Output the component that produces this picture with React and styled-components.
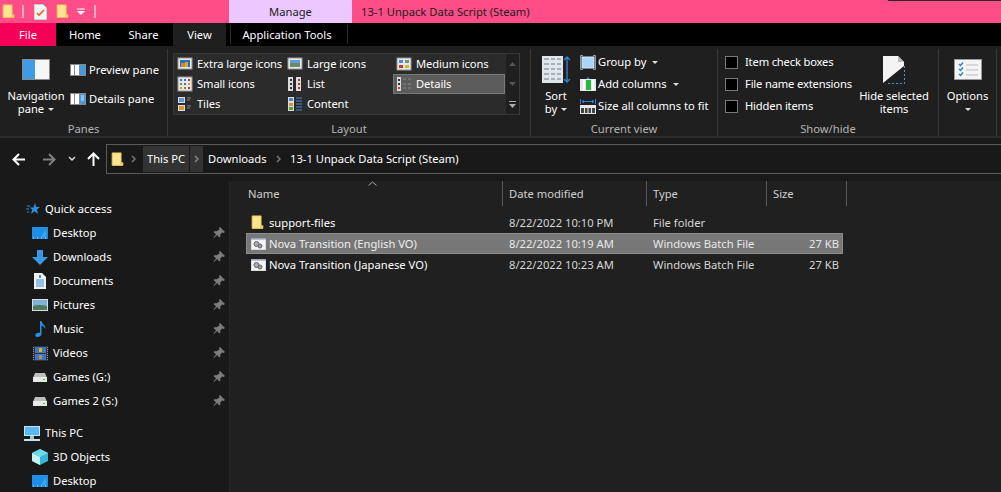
import React from "react";
import styled, { createGlobalStyle } from "styled-components";

const Global = createGlobalStyle`
  html, body { margin: 0; padding: 0; background: #191919; }
  * { box-sizing: border-box; }
`;
const Win = styled.div`
  width: 1001px; height: 492px; overflow: hidden; background: #191919; color: #fff;
  font-family: "Noto Sans", "Open Sans", sans-serif; font-size: 11.2px; line-height: 14px;
  display: flex; flex-direction: column; position: relative;
`;
const TitleBar = styled.div`
  height: 23px; background: #ff4d88; display: flex; align-items: center; flex: none; position: relative; color: #1c1c1c;
`;
const TopLine = styled.div`position: absolute; right: 0; top: 0; width: 113px; height: 1px; background: #2a2a2a;`;
const Quick = styled.div`width: 229px; display: flex; align-items: center; padding-left: 2px; height: 23px;`;
const QSep = styled.div`width: 2px; height: 13px; background: #f7a8c4; margin: ${p => p.$m};`;
const Manage = styled.div`width: 123px; height: 23px; background: #ebc8ff; display: flex; align-items: center; justify-content: center;`;
const TitleText = styled.div`margin-left: 9px;`;
const Tabs = styled.div`height: 23px; background: #000; display: flex; flex: none;`;
const Tab = styled.div`
  width: ${p => p.$w}px; height: 23px; display: flex; align-items: center; justify-content: center;
  background: ${p => p.$bg || "transparent"};
`;
const ContextTab = styled.div`
  width: 118px; height: 19px; margin: 2px 0 0 4px; padding-right: 4px; display: flex; align-items: center; justify-content: center;
  border-left: 1px solid #2b2b2b; border-right: 1px solid #2b2b2b;
`;
const Ribbon = styled.div`
  height: 92px; flex: none; background: #1f1f1f; display: grid;
  grid-template-columns: 168px 363px 187px 221px 58px 4px; border-bottom: 2px solid #2c2c2c; padding-top: 3px;
`;
const Group = styled.div`
  display: flex; flex-direction: column; border-right: 1px solid #3a3a3a; height: 87px;
`;
const GroupBody = styled.div`flex: 1; display: flex; padding: ${p => p.$pad || "0"}; min-height: 0;`;
const GroupLabel = styled.div`height: 14px; flex: none; text-align: center; color: #b5b5b5; line-height: 14px;`;
const BigBtn = styled.div`
  width: ${p => p.$w}px; flex: none; display: flex; flex-direction: column; align-items: center; text-align: center; line-height: 13px;
  padding-top: ${p => p.$top || 10}px; margin-left: ${p => p.$ml || 0}px; margin-right: ${p => p.$mr || 0}px;
`;
const RightBig = styled(BigBtn)`margin-left: auto; white-space: nowrap; letter-spacing: -0.08px;`;
const BigIcon = styled.div`height: ${p => p.$h}px; display: flex; margin-bottom: ${p => p.$mb}px; align-items: flex-start;`;
const Caret = styled.span`
  display: inline-block; width: 0; height: 0; border-left: 3px solid transparent; border-right: 3px solid transparent;
  border-top: 3px solid #ddd; margin-left: ${p => p.$ml ?? 4}px; vertical-align: 2px;
`;
const SmallStack = styled.div`display: flex; flex-direction: column; gap: ${p => p.$gap}px; padding-top: ${p => p.$top}px; margin-left: ${p => p.$ml || 0}px;`;
const SmallBtn = styled.div`display: flex; align-items: center; gap: ${p => p.$gap ?? 3}px; height: 14px; white-space: nowrap;`;
const Gallery = styled.div`
  width: 347px; height: 62px; background: #2b2b2b; border: 1px solid #3a3a3a; display: flex;
`;
const GalleryGrid = styled.div`width: 331px; display: grid; grid-template-columns: 110px 109px 112px; grid-template-rows: repeat(3, 20px); letter-spacing: -0.1px;`;
const GalleryItem = styled.div`
  display: flex; align-items: center; padding-left: ${p => p.$sel ? 2 : 3}px; gap: 4px; white-space: nowrap;
  ${p => p.$sel && "background: #5c5c5c; border: 1px solid #777;"}
`;
const GIcon = styled.div`width: 16px; height: 16px; flex: none; display: flex;`;
const Scroll = styled.div`width: 14px; display: flex; flex-direction: column; align-items: center; background: #1f1f1f; margin-left: 1px;`;
const ScrollCell = styled.div`height: 20px; display: flex; align-items: center; justify-content: center;`;
const CheckRow = styled.div`display: flex; align-items: center; gap: 7px; height: 14px; white-space: nowrap; letter-spacing: -0.17px;`;
const Check = styled.div`width: 13px; height: 13px; background: #000; border: 1px solid #7a7a7a;`;
const NavBar = styled.div`height: 43px; flex: none; background: #191919; display: flex; align-items: flex-start; padding-top: 6px;`;
const NavBtns = styled.div`width: 106px; height: 30px; flex: none; display: flex; align-items: center;`;
const NavBtn = styled.div`width: ${p => p.$w}px; flex: none; display: flex; justify-content: center;`;
const Address = styled.div`
  flex: 1; height: 30px; border: 1px solid #5a5a5a; border-right: none; background: #191919; display: flex; align-items: center; padding-left: 4px;
`;
const Crumb = styled.div`
  height: 26px; display: flex; align-items: center; justify-content: ${p => p.$start ? "flex-start" : "center"}; flex: none; width: ${p => p.$w}px;
  margin-left: ${p => p.$ml || 0}px; background: ${p => p.$on ? "#333" : "transparent"}; white-space: nowrap;
`;
const Body = styled.div`flex: 1; display: flex; min-height: 0;`;
const Sidebar = styled.div`width: 229px; flex: none; background: #191919; padding-top: 16px; overflow: hidden;`;
const SideRow = styled.div`
  height: 24px; display: flex; align-items: center; position: relative;
  padding-left: ${p => p.$pl}px; margin-top: ${p => p.$mt || 0}px;
`;
const SideIcon = styled.div`width: ${p => p.$w}px; flex: none; display: flex; align-items: center; justify-content: ${p => p.$center ? "center" : "flex-start"}; margin-right: ${p => p.$mr || 0}px; height: 16px;`;
const Pin = styled.div`position: absolute; left: 213px; top: 6px; display: flex;`;
const Pane = styled.div`flex: 1; background: #202020; border-left: 1px solid #262626; padding-left: 16px;`;
const Head = styled.div`
  height: 26px; display: grid; grid-template-columns: 257px 144px 120px 80px; position: relative; margin-bottom: 5px; width: 601px;
`;
const HeadCell = styled.div`
  padding-left: ${p => p.$pl}px; display: flex; align-items: center; height: 25px; color: #d0d0d0; border-right: 1px solid #5a5a5a;
`;
const SortMark = styled.div`position: absolute; left: 122px; top: 0; display: flex;`;
const Row = styled.div`
  width: 597px; height: 21px; display: grid; grid-template-columns: 22px 240px 144px 120px 1fr; align-items: center;
  background: ${p => p.$sel ? "#777" : "transparent"}; border: 1px solid ${p => p.$sel ? "#8c8c8c" : "transparent"};
  color: ${p => p.$sel ? "#f0f0f0" : "#fff"}; white-space: nowrap;
`;
const RowIcon = styled.div`display: flex; padding-left: 4px;`;
const Muted = styled.div`color: ${p => p.$sel ? "#e8e8e8" : "#d6d6d6"}; text-align: ${p => p.$right ? "right" : "left"}; padding-right: ${p => p.$right ? 3 : 0}px;`;
const Spacer = styled.span`width: ${p => p.$w}px; flex: none;`;

const Folder = ({ s = 16 }) => (
  <svg width={s} height={s * 1.1} viewBox="0 0 14 16">
    <path d="M1 1h10v11h2v3H1z" fill="#fde58f" stroke="#e9c95c" />
    <path d="M11 12v3" stroke="#d8b64a" />
  </svg>
);
const BigNav = () => (
  <svg width="28" height="21" viewBox="0 0 28 21">
    <rect width="28" height="21" fill="#8a8a8a" /><rect x="1" y="1" width="12" height="19" fill="#3f9be6" /><rect x="13" y="1" width="14" height="19" fill="#f6f6f6" />
  </svg>
);
const PaneIco = ({ kind }) => (
  <svg width="16" height="12" viewBox="0 0 16 12">
    <rect width="16" height="12" fill="#8a8a8a" /><rect x="1" y="1" width="3" height="10" fill="#fff" />
    <rect x="5" y="1" width="4" height="10" fill="#fff" /><rect x="10" y="1" width="5" height="10" fill="#3f9be6" />
    {kind === "d" && <path d="M11 3h3M11 5h3M11 7h3" stroke="#cfe6fb" />}
  </svg>
);
const Dots = ({ d }) => (
  <svg width="16" height="16" viewBox="0 0 16 16">{d}</svg>
);
const Ico = {
  xl: <Dots d={<><rect x="1" y="2" width="14" height="11" fill="#e8e8e8" stroke="#999" /><rect x="3" y="4" width="10" height="7" fill="#2a6fb5" /><rect x="4" y="7" width="4" height="4" fill="#c83" /><rect x="8" y="6" width="3" height="5" fill="#ca3" /></>} />,
  large: <Dots d={<><rect x="1" y="2" width="14" height="11" fill="#e8e8e8" stroke="#999" /><rect x="3" y="4" width="10" height="3" fill="#5aa0d8" /><rect x="3" y="7" width="10" height="4" fill="#6a8a6a" /></>} />,
  med: <Dots d={<><rect x="1" y="2" width="14" height="12" fill="#e8e8e8" stroke="#999" /><rect x="3" y="4" width="4" height="3" fill="#4a8ad0" /><rect x="9" y="4" width="4" height="3" fill="#6a9a7a" /><rect x="3" y="9" width="4" height="3" fill="#c33" /><rect x="9" y="9" width="4" height="3" fill="#cb3" /></>} />,
  small: <Dots d={<><rect x="1" y="1" width="14" height="14" fill="#e8e8e8" stroke="#999" /><path d="M3 3h2v2H3zM7 3h2v2H7z" fill="#3a7ac0" /><path d="M11 3h2v2h-2z" fill="#c33" /><path d="M3 7h2v2H3z" fill="#693" /><path d="M7 7h2v2H7z" fill="#3a7ac0" /><path d="M11 7h2v2h-2z" fill="#c93" /><path d="M3 11h2v2H3z" fill="#c93" /><path d="M7 11h2v2H7z" fill="#693" /><path d="M11 11h2v2h-2z" fill="#c33" /></>} />,
  list: <Dots d={<><rect x="1" y="1" width="5" height="14" fill="#ddd" /><rect x="9" y="1" width="5" height="14" fill="#ddd" /><path d="M3 3h2v2H3zM3 7h2v2H3zM3 11h2v2H3z" fill="#333" /><path d="M11 3h2v2h-2zM11 7h2v2h-2zM11 11h2v2h-2z" fill="#a33" /></>} />,
  details: <Dots d={<><rect x="1" y="1" width="4" height="14" fill="#ddd" /><path d="M2 3h2v2H2zM2 7h2v2H2z" fill="#333" /><path d="M2 11h2v2H2z" fill="#c33" /><path d="M7 3h3M12 3h3M7 8h3M12 8h3M7 12h3M12 12h3" stroke="#888" /></>} />,
  tiles: <Dots d={<><rect x="1" y="1" width="7" height="6" fill="#ddd" /><rect x="2" y="2" width="5" height="4" fill="#5a9ad8" /><rect x="1" y="9" width="7" height="6" fill="#ddd" /><rect x="2" y="10" width="5" height="4" fill="#c93" /><path d="M10 2h4M10 4h3M10 10h4M10 12h3" stroke="#888" /></>} />,
  content: <Dots d={<><rect x="1" y="1" width="6" height="14" fill="#ddd" /><rect x="2" y="2" width="4" height="3" fill="#4a8ad0" /><rect x="2" y="7" width="4" height="3" fill="#c93" /><rect x="2" y="11" width="4" height="3" fill="#693" /><path d="M9 2h6M9 5h6M9 8h6M9 11h6M9 14h6" stroke="#4a8ad0" /></>} />,
};
const SortIco = () => (
  <svg width="29" height="27" viewBox="0 0 29 27">
    <rect width="21" height="27" fill="#dfe6ec" />
    {[3, 8, 13, 18, 23].map(y => <path key={y} d={`M2 ${y}h5M9 ${y}h4M15 ${y}h4`} stroke="#a5b0ba" strokeWidth="2" />)}
    <path d="M25 1v25M22 4l3-3 3 3M22 23l3 3 3-3" stroke="#2f80d0" strokeWidth="1.4" fill="none" />
  </svg>
);
const GroupIco = () => (
  <svg width="16" height="15" viewBox="0 0 16 15"><path d="M3 .5H.5v14H3M13 .5h2.500v14H13" stroke="#999" fill="none" /><rect x="2" y="2" width="12" height="11" fill="#a9d4f8" stroke="#d8ecfb" /></svg>
);
const AddIco = () => (
  <svg width="16" height="14" viewBox="0 0 16 14"><path d="M8 0l-2 2h4z" fill="#2f80d0" /><rect y="2" width="16" height="12" fill="#e8e8e8" /><rect x="6" y="3" width="5" height="10" fill="#25b83c" /><rect x="3" y="3" width="2" height="10" fill="#fff" /><rect x="12" y="3" width="2" height="10" fill="#fff" /></svg>
);
const SizeIco = () => (
  <svg width="16" height="15" viewBox="0 0 16 15"><path d="M.5 0v5M15.5 0v5M2 2.500h12M4 1L2 2.500 4 4M12 1l2 1.500L12 4" stroke="#2f80d0" fill="none" /><rect y="6" width="16" height="9" fill="#e8e8e8" /><path d="M1 9h14v5H1z" fill="#444" /><path d="M4.500 9v5M8 9v5M11.500 9v5" stroke="#e8e8e8" /></svg>
);
const HideIco = () => (
  <svg width="22" height="28" viewBox="0 0 22 28">
    <path d="M0 0h15l6 6v4L0 27z" fill="#f4f4f4" /><path d="M15 0l6 6h-6z" fill="#bbb" />
    <path d="M21.500 10v17.500H4" stroke="#3f9be6" strokeDasharray="2 2" fill="none" />
  </svg>
);
const OptionsIco = () => (
  <svg width="28" height="21" viewBox="0 0 28 21">
    <rect width="28" height="21" fill="#9a9a9a" /><rect x="1" y="1" width="26" height="19" fill="#f4f4f4" />
    <path d="M5 5l1.500 1.500L9 3.500M5 10l1.500 1.500L9 8.500M5 15l1.500 1.500L9 13.500" stroke="#2f80d0" strokeWidth="1.500" fill="none" />
    <path d="M12 6h12M12 11h12M12 16h12" stroke="#bbb" />
  </svg>
);
const ArrowL = () => (
  <svg width="14" height="13" viewBox="0 0 14 13"><path d="M13 6.500H2M7 1L1.500 6.500 7 12" stroke="#fff" strokeWidth="2" fill="none" /></svg>
);
const ArrowR = () => (
  <svg width="14" height="13" viewBox="0 0 14 13"><path d="M1 6.500h11M7 1l5.500 5.500L7 12" stroke="#808080" strokeWidth="2" fill="none" /></svg>
);
const ArrowUp = () => (
  <svg width="13" height="14" viewBox="0 0 13 14"><path d="M6.500 14V2M1 7l5.500-5.500L12 7" stroke="#fff" strokeWidth="2" fill="none" /></svg>
);
const Chev = () => (
  <svg width="8" height="6" viewBox="0 0 8 6"><path d="M1 1l3 3 3-3" stroke="#ddd" strokeWidth="1.500" fill="none" /></svg>
);
const ChevR = ({ c = "#777" }) => (
  <svg width="5" height="8" viewBox="0 0 5 8"><path d="M1 1l3 3-3 3" stroke={c} strokeWidth="1.500" fill="none" /></svg>
);
const PinIco = () => (
  <svg width="12" height="12" viewBox="0 0 12 12"><path d="M7 0l5 5-1.500 1L9 5.500 7 8l.500 1.500-1 1-2.500-2.500L1 11l-.500-.500L3 7.500.500 5l1-1 1.500.500L6.500 2.500 6 1z" fill="#7c7c7c" /></svg>
);
const Star = () => (
  <svg width="14" height="13" viewBox="0 0 14 13"><path d="M9 0l1.200 4H14l-3 2.500L12 11 8.500 8.300 5 11l1.200-4.500L3.500 4.500h4z" fill="#2f8fe0" /><path d="M1 3h3M0 6h3M1 9h2" stroke="#2f8fe0" /></svg>
);
const Side = {
  desktop: <svg width="16" height="12" viewBox="0 0 16 12"><rect width="16" height="12" fill="#1e8fe6" /><path d="M1 11h14" stroke="#bfe3fb" strokeDasharray="1 3" /><path d="M9 10l5-8v8z" fill="#3aa6ee" /></svg>,
  down: <svg width="16" height="15" viewBox="0 0 16 15"><path d="M5 0h6v7h5l-8 8-8-8h5z" fill="#3a97e6" /></svg>,
  docs: <svg width="12" height="16" viewBox="0 0 12 16"><path d="M0 0h8l4 4v12H0z" fill="#f2f2f2" /><path d="M2 7h8M2 9h8M2 11h8M2 13h8" stroke="#3a8fdc" /><path d="M5 2h2v3H5z" fill="#3a8fdc" /></svg>,
  pics: <svg width="16" height="12" viewBox="0 0 16 12"><rect width="16" height="12" fill="#dcdcdc" /><rect x="1" y="1" width="14" height="10" fill="#7bb3d8" /><path d="M1 7q5-2 14 0v4H1z" fill="#4d7a5e" /></svg>,
  music: <svg width="11" height="16" viewBox="0 0 11 16"><path d="M5 0h1.500c0 3 4.500 4 4 8-1-2-2.500-3-4-3.500V13c0 2-2 3-4 3S0 14.500.5 13.500 3 11.500 5 12z" fill="#2a8fe6" /></svg>,
  video: <svg width="15" height="15" viewBox="0 0 15 15"><rect width="15" height="15" fill="#333" /><path d="M.5 1v13M14.500 1v13" stroke="#999" strokeDasharray="1 1" /><rect x="2" y="1" width="11" height="6" fill="#3a78c8" /><rect x="2" y="8" width="11" height="6" fill="#3a78c8" /><rect x="6" y="2" width="3" height="4" fill="#d8b030" /><rect x="6" y="9" width="3" height="4" fill="#c84" /></svg>,
  drive: <svg width="14" height="9" viewBox="0 0 14 9"><path d="M2 0h10l2 5H0z" fill="#bdbdbd" /><rect y="4" width="14" height="5" fill="#e8e8e8" /><rect x="10" y="6" width="2" height="1" fill="#3c3" /></svg>,
  pc: <svg width="16" height="15" viewBox="0 0 16 15"><rect width="16" height="10" fill="#bfe8fb" /><rect x="1" y="1" width="14" height="8" fill="#5ab8f0" /><rect x="6" y="10" width="4" height="3" fill="#9cc" /><rect y="13" width="16" height="2" fill="#cde" /></svg>,
  obj: <svg width="16" height="16" viewBox="0 0 16 16"><path d="M8 0l8 4v8l-8 4-8-4V4z" fill="#2fb6d8" /><path d="M0 4l8 4v8l-8-4z" fill="#c5f2f6" /><path d="M8 0l8 4-8 4-8-4z" fill="#6fd8e8" /></svg>,
};
const BatIco = () => (
  <svg width="15" height="12" viewBox="0 0 15 12">
    <rect width="15" height="12" fill="#dcdcdc" /><rect x="1" y="2" width="13" height="9" fill="#f4f4f4" /><rect width="15" height="1.500" fill="#9aa7b5" />
    <circle cx="5.500" cy="6" r="2.500" fill="#aab" stroke="#666" /><circle cx="9" cy="8" r="2" fill="#99a" stroke="#666" />
  </svg>
);

const gallery = [
  [Ico.xl, "Extra large icons"], [Ico.large, "Large icons"], [Ico.med, "Medium icons"],
  [Ico.small, "Small icons"], [Ico.list, "List"], [Ico.details, "Details", true],
  [Ico.tiles, "Tiles"], [Ico.content, "Content"],
];
const side = [
  [Side.desktop, "Desktop"], [Side.down, "Downloads"], [Side.docs, "Documents"], [Side.pics, "Pictures"],
  [Side.music, "Music"], [Side.video, "Videos"], [Side.drive, "Games (G:)"], [Side.drive, "Games 2 (S:)"],
];

export default function App() {
  return (
    <Win>
      <Global />
      <TitleBar>
        <TopLine />
        <Quick>
          <Folder s={13} /><QSep $m="0 0 0 7px" />
          <Spacer $w={10} />
          <svg width="13" height="16" viewBox="0 0 13 16"><path d="M0 0h9l4 4v12H0z" fill="#f4f4f4" stroke="#aaa" /><path d="M3 9l2 2 5-5" stroke="#e8602c" strokeWidth="1.600" fill="none" /></svg>
          <Spacer $w={9} /><Folder s={13} />
          <Spacer $w={8} />
          <svg width="8" height="8" viewBox="0 0 8 8"><path d="M0 1h8" stroke="#fff" /><path d="M0 3h8L4 7z" fill="#fff" /></svg>
          <QSep $m="0 0 0 9px" />
        </Quick>
        <Manage>Manage</Manage>
        <TitleText>13-1 Unpack Data Script (Steam)</TitleText>
      </TitleBar>
      <Tabs>
        <Tab $w={56} $bg="#f50057">File</Tab>
        <Tab $w={58}>Home</Tab>
        <Tab $w={59}>Share</Tab>
        <Tab $w={53} $bg="#1f1f1f">View</Tab>
        <ContextTab>Application Tools</ContextTab>
      </Tabs>
      <Ribbon>
        <Group>
          <GroupBody>
            <BigBtn $w={56} $ml={8}>
              <BigIcon $h={21} $mb={9}><BigNav /></BigIcon>
              <span>Navigation</span><span>pane<Caret /></span>
            </BigBtn>
            <SmallStack $gap={15} $top={14} $ml={6}>
              <SmallBtn><PaneIco kind="p" />Preview pane</SmallBtn>
              <SmallBtn><PaneIco kind="d" />Details pane</SmallBtn>
            </SmallStack>
          </GroupBody>
          <GroupLabel>Panes</GroupLabel>
        </Group>
        <Group>
          <GroupBody $pad="4px 0 0 5px">
            <Gallery>
              <GalleryGrid>
                {gallery.map(([ic, t, sel]) => (
                  <GalleryItem key={t} $sel={sel}><GIcon>{ic}</GIcon>{t}</GalleryItem>
                ))}
              </GalleryGrid>
              <Scroll>
                <ScrollCell><svg width="7" height="4"><path d="M0 4l3.500-4L7 4z" fill="#555" /></svg></ScrollCell>
                <ScrollCell><svg width="7" height="4"><path d="M0 0l3.500 4L7 0z" fill="#555" /></svg></ScrollCell>
                <ScrollCell><svg width="9" height="7"><path d="M1 .5h7" stroke="#aaa" /><path d="M1 3h7L4.500 7z" fill="#aaa" /></svg></ScrollCell>
              </Scroll>
            </Gallery>
          </GroupBody>
          <GroupLabel>Layout</GroupLabel>
        </Group>
        <Group>
          <GroupBody>
            <BigBtn $w={40} $ml={5} $top={7}>
              <BigIcon $h={27} $mb={6}><SortIco /></BigIcon>
              <span>Sort</span><span>by<Caret /></span>
            </BigBtn>
            <SmallStack $gap={8} $top={6} $ml={4}>
              <SmallBtn $gap={2}><GroupIco />Group by<Caret /></SmallBtn>
              <SmallBtn $gap={2}><AddIco />Add columns<Caret /></SmallBtn>
              <SmallBtn $gap={2}><SizeIco />Size all columns to fit</SmallBtn>
            </SmallStack>
          </GroupBody>
          <GroupLabel>Current view</GroupLabel>
        </Group>
        <Group>
          <GroupBody $pad="0 0 0 7px">
            <SmallStack $gap={8} $top={6}>
              <CheckRow><Check />Item check boxes</CheckRow>
              <CheckRow><Check />File name extensions</CheckRow>
              <CheckRow><Check />Hidden items</CheckRow>
            </SmallStack>
            <RightBig $w={72} $mr={8} $top={7}>
              <BigIcon $h={28} $mb={5}><HideIco /></BigIcon>
              <span>Hide selected</span><span>items</span>
            </RightBig>
          </GroupBody>
          <GroupLabel>Show/hide</GroupLabel>
        </Group>
        <Group>
          <GroupBody>
            <BigBtn $w={57} $top={10}>
              <BigIcon $h={21} $mb={9}><OptionsIco /></BigIcon>
              <span>Options</span><span><Caret $ml={0} /></span>
            </BigBtn>
          </GroupBody>
          <GroupLabel />
        </Group>
      </Ribbon>
      <NavBar>
        <NavBtns>
          <NavBtn $w={38}><ArrowL /></NavBtn>
          <NavBtn $w={22}><ArrowR /></NavBtn>
          <NavBtn $w={24}><Chev /></NavBtn>
          <NavBtn $w={18}><ArrowUp /></NavBtn>
        </NavBtns>
        <Address>
          <Folder s={13} />
          <Crumb $w={19}><ChevR /></Crumb>
          <Crumb $w={46} $on>This PC</Crumb>
          <Crumb $w={13} $ml={1} $on><ChevR c="#888" /></Crumb>
          <Crumb $w={64} $ml={5} $start>Downloads</Crumb>
          <Crumb $w={12}><ChevR /></Crumb>
          <Crumb $w={170} $ml={6} $start>13-1 Unpack Data Script (Steam)</Crumb>
        </Address>
      </NavBar>
      <Body>
        <Sidebar>
          <SideRow $pl={26}><SideIcon $w={19}><Star /></SideIcon>Quick access</SideRow>
          {side.map(([ic, t]) => (
            <SideRow key={t} $pl={32}>
              <SideIcon $w={16} $mr={5} $center>{ic}</SideIcon>{t}
              <Pin><PinIco /></Pin>
            </SideRow>
          ))}
          <SideRow $pl={24} $mt={8}><SideIcon $w={21}>{Side.pc}</SideIcon>This PC</SideRow>
          <SideRow $pl={32}><SideIcon $w={21}>{Side.obj}</SideIcon>3D Objects</SideRow>
          <SideRow $pl={32}><SideIcon $w={21}>{Side.desktop}</SideIcon>Desktop</SideRow>
        </Sidebar>
        <Pane>
          <Head>
            <SortMark><svg width="9" height="5" viewBox="0 0 9 5"><path d="M.5 4.500l4-3.500 4 3.500" stroke="#aaa" fill="none" /></svg></SortMark>
            <HeadCell $pl={2}>Name</HeadCell>
            <HeadCell $pl={6}>Date modified</HeadCell>
            <HeadCell $pl={6}>Type</HeadCell>
            <HeadCell $pl={6}>Size</HeadCell>
          </Head>
          <Row>
            <RowIcon><Folder s={13} /></RowIcon><span>support-files</span>
            <Muted>8/22/2022 10:10 PM</Muted><Muted>File folder</Muted><Muted />
          </Row>
          <Row $sel>
            <RowIcon><BatIco /></RowIcon><span>Nova Transition (English VO)</span>
            <Muted $sel>8/22/2022 10:19 AM</Muted><Muted $sel>Windows Batch File</Muted><Muted $sel $right>27 KB</Muted>
          </Row>
          <Row>
            <RowIcon><BatIco /></RowIcon><span>Nova Transition (Japanese VO)</span>
            <Muted>8/22/2022 10:23 AM</Muted><Muted>Windows Batch File</Muted><Muted $right>27 KB</Muted>
          </Row>
        </Pane>
      </Body>
    </Win>
  );
}
